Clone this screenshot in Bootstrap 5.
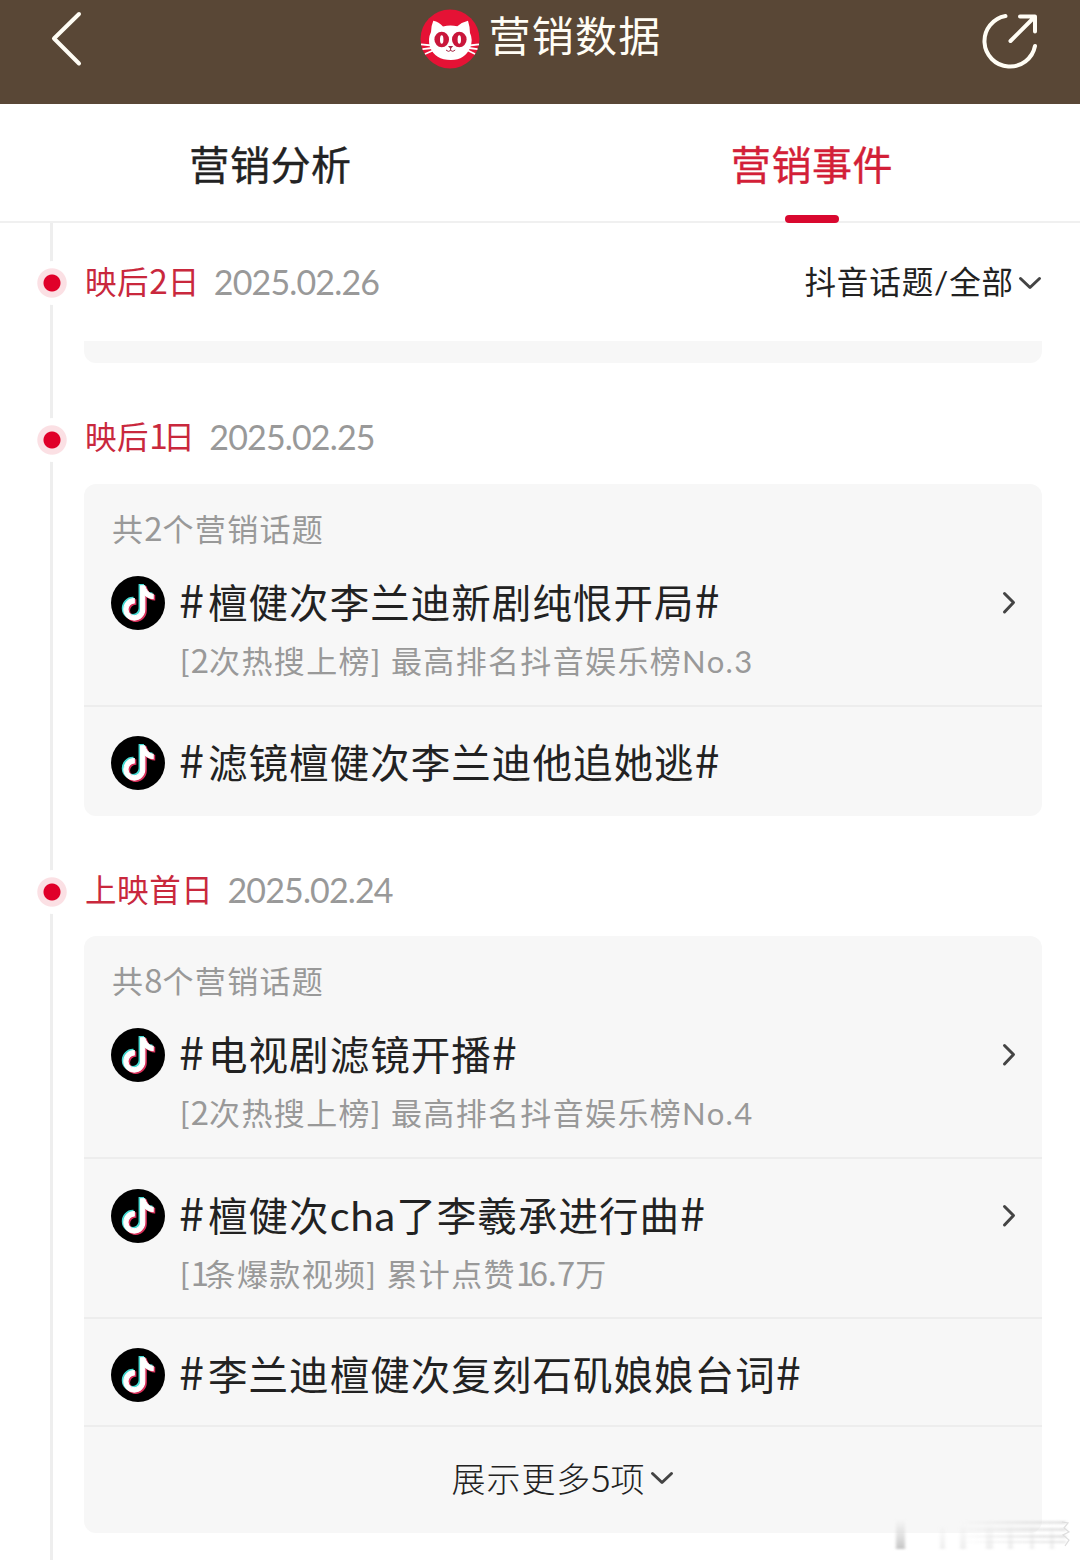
<!DOCTYPE html>
<html lang="zh-CN">
<head>
<meta charset="utf-8">
<meta name="viewport" content="width=device-width, initial-scale=1">
<title>营销数据</title>
<link href="https://cdn.jsdelivr.net/npm/bootstrap@5.3.0/dist/css/bootstrap.min.css" rel="stylesheet">
<style>
body{font-family:Lato,"Noto Sans CJK SC",sans-serif;color:#222;background:#fff;height:1560px;overflow:hidden;position:relative}
svg{display:block;flex:none}
.topbar{height:104px;background:#594736;color:#fffdf5;padding:9px 40px 0 46px}
.topbar-title{margin-left:15px}
.topbar-name{font-size:42px;letter-spacing:1.2px;line-height:54px;margin-left:9px}
.tabs{height:119px;border-bottom:2px solid #f0f0f0}
.tab-item{font-size:40px;-webkit-text-stroke:.4px currentColor;letter-spacing:.6px;line-height:60px;padding:31px 0 0 1px;position:relative}
.tab-item.current{color:#d31f38;padding-left:4px}
.tab-item.current::after{content:"";position:absolute;left:245px;top:111px;width:54px;height:8px;border-radius:4px;background:#d9082f}
.timeline{padding:0 38px 0 84px;position:relative;height:1337px}
.timeline::before{content:"";position:absolute;left:50px;top:0;bottom:0;width:3px;background:#eee}
.day-head{position:relative;line-height:40px;font-size:31.5px}
.day-head::before{content:"";position:absolute;left:-54px;width:44px;height:44px;border-radius:50%;top:calc(var(--dot) - 22px);background:radial-gradient(circle,#e00029 8px,#fbe0e4 9px,#fbe0e4 14.2px,#fff 15.2px)}
.h-a{height:118px;padding-top:39px;--dot:59.5px}
.h-b{height:121px;padding-top:54px;--dot:77px}
.h-c{height:120px;padding-top:54px;--dot:76px}
.day-name{color:#c9283d;letter-spacing:.6px;margin-left:1px}
.day-date{color:#999;font-size:34px;letter-spacing:-.85px;margin-left:14px}
.num{font-family:"Noto Sans CJK SC",sans-serif;font-size:1.06em;line-height:1;letter-spacing:0}
.num-one{letter-spacing:-4.5px}
.filter{letter-spacing:.9px;color:#222}
.filter svg{margin:13px 0 0 4px}
.panel{background:#f7f7f7;border-radius:12px}
.panel-end{height:22px;border-radius:0 0 12px 12px}
.panel-head{height:63px;padding:25px 28px 0;line-height:40px;font-size:31px;letter-spacing:1.3px;color:#999}
.topic{padding:29px 25px 0 27px;height:160px;border-bottom:2px solid #ededed}
.topic.short{height:108px}
.topic.last{height:109px;border-bottom:0}
.topic-title{font-size:39.5px;line-height:54px;letter-spacing:1.05px;margin-left:14px}
.hash{font-family:"Noto Sans CJK SC",sans-serif;font-size:45px;line-height:40px;letter-spacing:4px}
.latin{font-size:41.5px;letter-spacing:1px}
.topic-sub{font-size:31px;line-height:40px;letter-spacing:1.35px;color:#999;margin:11px 0 0 69px}
.more{height:106px;padding-bottom:4px;font-size:34px;font-weight:300;letter-spacing:.9px}
.more svg{margin-left:5px}
.ghost-mark{position:absolute;left:890px;top:1515px}
</style>
<script src="https://cdn.jsdelivr.net/npm/bootstrap@5.3.0/dist/js/bootstrap.bundle.min.js"></script>
</head>
<body>
<svg width="0" height="0" class="position-absolute">
<defs>
<path id="note" d="M9 0h1.980c.144.715.54 1.617 1.235 2.512C12.895 3.389 13.797 4 15 4v2c-1.753 0-3.070-.814-4-1.829V11a5 5 0 1 1-5-5v2a3 3 0 1 0 3 3V0Z"/>
<symbol id="tiktok" viewBox="0 0 54 54"><circle cx="27" cy="27" r="27" fill="#000"/>
<use href="#note" transform="translate(9.3 8.6) scale(2.1 2.15)" fill="#45dcd5" stroke="#45dcd5" stroke-width=".6"/>
<use href="#note" transform="translate(12.100 10.900) scale(2.1 2.15)" fill="#d8305a" stroke="#d8305a" stroke-width=".6"/>
<use href="#note" transform="translate(10.7 9.7) scale(2.1 2.15)" fill="#fff" stroke="#fff" stroke-width=".5"/></symbol>
<symbol id="go" viewBox="0 0 16 24"><path d="M3.500 2.500l9 9-9 9.500" fill="none" stroke="#444" stroke-width="3" stroke-linecap="round" stroke-linejoin="round"/></symbol>
<symbol id="down" viewBox="0 0 24 16"><path d="M2.500 3.500l9.500 9 9.500-9" fill="none" stroke="#444" stroke-width="3" stroke-linecap="round" stroke-linejoin="round"/></symbol>
</defs></svg>

<header class="topbar d-flex justify-content-between align-items-start">
  <svg width="40" height="60" viewBox="0 0 40 60" fill="none" stroke="#fffdf5" stroke-width="4" stroke-linecap="round" stroke-linejoin="round"><path d="M33 5L8 29.500 33 54.500"/></svg>
  <div class="topbar-title d-flex">
    <svg width="60" height="60" viewBox="0 0 60 60"><circle cx="30" cy="30" r="29.500" fill="#e51235"/>
      <path d="M13.300 11.700Q19 13 23 17.500Q30 15.500 37.300 17.300Q42 13 48 11.700Q50 18 50 24Q53 30 50.500 38Q45 51 31 51Q15 51 10 38Q7.500 30 11 23Q11 17 13.300 11.700Z" fill="#fff"/>
      <path d="M1 35.300L12 36.500M2.500 40.200L12 39M5 45L13 41.500M59 35.300L49 36.500M57.500 40.200L49 39M55 45L48 41.500" stroke="#fff" stroke-width="1.800"/>
      <ellipse cx="21.700" cy="30.500" rx="7.300" ry="7.800" fill="#c9163a"/><ellipse cx="39.300" cy="30.500" rx="7.300" ry="7.800" fill="#c9163a"/>
      <ellipse cx="21.700" cy="30.500" rx="1.700" ry="4.300" fill="#fff"/><ellipse cx="39.300" cy="30.500" rx="1.700" ry="4.300" fill="#fff"/>
      <path d="M28 37h5.200l-2.600 3z" fill="#a52846"/><path d="M30.600 39v2.500M26 41q2.300 2.500 4.600.5q2.300 2 4.600-.5" fill="none" stroke="#a52846" stroke-width="1"/>
    </svg>
    <div class="topbar-name">营销数据</div>
  </div>
  <svg width="60" height="62" viewBox="0 0 60 62" fill="none" stroke="#fffdf5" stroke-width="4" stroke-linecap="round" stroke-linejoin="round"><path d="M25.500 7A25.500 25.500 0 1 0 55 37M30.500 32L54.500 8M40 7.500H55V22.500"/></svg>
</header>

<nav class="tabs d-flex text-center">
  <div class="tab-item w-50">营销分析</div>
  <div class="tab-item current w-50"><span>营销事件</span></div>
</nav>

<main class="timeline">
  <div class="day-head h-a d-flex">
    <span class="day-name">映后<span class="num">2</span>日</span><span class="day-date">2025.02.26</span>
    <div class="filter ms-auto d-flex"><span>抖音话题/全部</span><svg width="24" height="16"><use href="#down"/></svg></div>
  </div>
  <div class="panel panel-end"></div>

  <div class="day-head h-b d-flex"><span class="day-name">映后<span class="num num-one">1</span>日</span><span class="day-date">2025.02.25</span></div>
  <section class="panel">
    <div class="panel-head">共<span class="num">2</span>个营销话题</div>
    <div class="topic">
      <div class="d-flex align-items-center"><svg width="54" height="54"><use href="#tiktok"/></svg><span class="topic-title"><span class="hash">#</span>檀健次李兰迪新剧纯恨开局<span class="hash">#</span></span><svg class="ms-auto" width="16" height="24"><use href="#go"/></svg></div>
      <div class="topic-sub">[<span class="num">2</span>次热搜上榜] 最高排名抖音娱乐榜No.3</div>
    </div>
    <div class="topic last">
      <div class="d-flex align-items-center"><svg width="54" height="54"><use href="#tiktok"/></svg><span class="topic-title"><span class="hash">#</span>滤镜檀健次李兰迪他追她逃<span class="hash">#</span></span></div>
    </div>
  </section>

  <div class="day-head h-c d-flex"><span class="day-name">上映首日</span><span class="day-date">2025.02.24</span></div>
  <section class="panel">
    <div class="panel-head">共<span class="num">8</span>个营销话题</div>
    <div class="topic">
      <div class="d-flex align-items-center"><svg width="54" height="54"><use href="#tiktok"/></svg><span class="topic-title"><span class="hash">#</span>电视剧滤镜开播<span class="hash">#</span></span><svg class="ms-auto" width="16" height="24"><use href="#go"/></svg></div>
      <div class="topic-sub">[<span class="num">2</span>次热搜上榜] 最高排名抖音娱乐榜No.4</div>
    </div>
    <div class="topic">
      <div class="d-flex align-items-center"><svg width="54" height="54"><use href="#tiktok"/></svg><span class="topic-title"><span class="hash">#</span>檀健次<span class="latin">cha</span>了李羲承进行曲<span class="hash">#</span></span><svg class="ms-auto" width="16" height="24"><use href="#go"/></svg></div>
      <div class="topic-sub">[<span class="num num-one">1</span>条爆款视频] 累计点赞<span class="num num-one">1</span><span class="num">6.7</span>万</div>
    </div>
    <div class="topic short">
      <div class="d-flex align-items-center"><svg width="54" height="54"><use href="#tiktok"/></svg><span class="topic-title"><span class="hash">#</span>李兰迪檀健次复刻石矶娘娘台词<span class="hash">#</span></span></div>
    </div>
    <div class="more d-flex justify-content-center align-items-center"><span>展示更多<span class="num">5</span>项</span><svg width="24" height="16"><use href="#down"/></svg></div>
  </section>
</main>

<svg class="ghost-mark" width="184" height="36" viewBox="0 0 184 36">
  <defs>
    <linearGradient id="fadeDown" x2="0" y2="1"><stop offset="0" stop-color="#ccc" stop-opacity="0"/><stop offset="1" stop-color="#c4c4c4"/></linearGradient>
    <linearGradient id="fadeRight"><stop offset="0" stop-color="#ccc" stop-opacity="0"/><stop offset="1" stop-color="#d0d0d0"/></linearGradient>
    <filter id="soft"><feGaussianBlur stdDeviation="1.500 .8"/></filter>
  </defs>
  <path d="M0 18H184V36H0z" fill="#fff" opacity=".6"/>
  <g filter="url(#soft)"><path d="M6 4h9v30H6z" fill="url(#fadeDown)"/>
  <path d="M50 12h5v22h-5zM70 8h6v26h-6zM96 8h7v26h-7zM118 8h5v26h-5zM140 8h4v26h-4zM160 8h4v26h-4z" fill="url(#fadeDown)" opacity=".3"/>
  <path d="M70 6H176v3H70zM70 13H176v3H70zM70 20H176v3H70zM70 26H176v2H70z" fill="url(#fadeRight)" opacity=".6"/></g>
  <path d="M172 7l6 1-4 5 5 4-6 3 6 5-4 6" fill="none" stroke="#ddd" stroke-width="1.200"/>
</svg>
</body>
</html>
